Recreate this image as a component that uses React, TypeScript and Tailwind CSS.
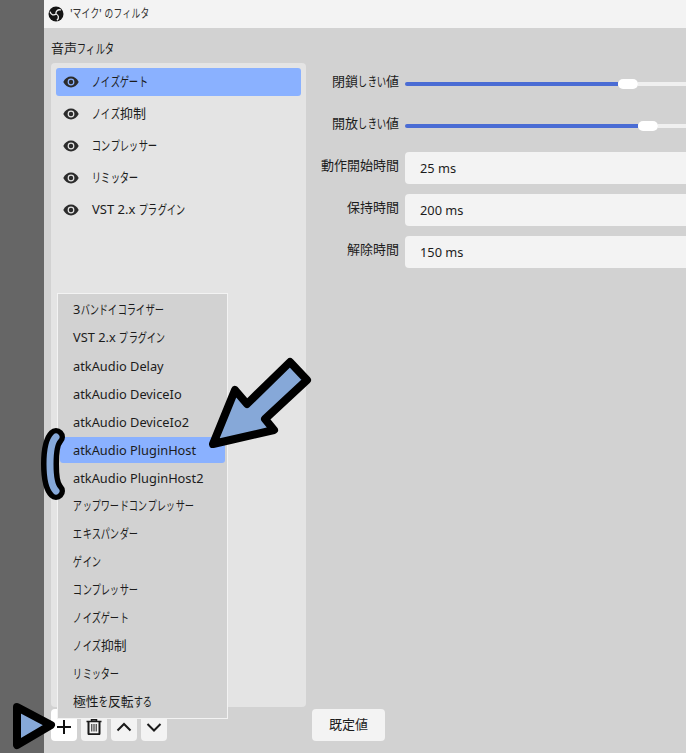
import type { ReactNode } from "react";

const font = "font-['Noto_Sans','Noto_Sans_CJK_JP',sans-serif]";

const filters = ["ノイズゲート", "ノイズ抑制", "コンプレッサー", "リミッター", "VST 2.x プラグイン"];

const menuItems = [
  "3バンドイコライザー",
  "VST 2.x プラグイン",
  "atkAudio Delay",
  "atkAudio DeviceIo",
  "atkAudio DeviceIo2",
  "atkAudio PluginHost",
  "atkAudio PluginHost2",
  "アップワードコンプレッサー",
  "エキスパンダー",
  "ゲイン",
  "コンプレッサー",
  "ノイズゲート",
  "ノイズ抑制",
  "リミッター",
  "極性を反転する",
];

// the kana in the picture are condensed and much narrower than the kanji
function Jp({ text, small }: { text: string; small?: boolean }) {
  return (
    <span className="whitespace-nowrap">
      {Array.from(text).map((ch, i) =>
        /[\u3040-\u30ff]/.test(ch) ? (
          <span key={i} className={`inline-flex justify-center ${small ? "w-[8.8px]" : "w-[9.3px]"}`}>
            <span className={`inline-block shrink-0 ${small ? "scale-x-[0.73]" : "scale-x-[0.72]"}`}>{ch}</span>
          </span>
        ) : (
          <span key={i}>{ch}</span>
        ),
      )}
    </span>
  );
}

function EyeIcon() {
  return (
    <svg width="16" height="12" viewBox="0 0 16 12" className="shrink-0">
      <path
        fillRule="evenodd"
        fill="#2b2b2b"
        d="M0.3 6C2 2.500 4.800 0.600 8 0.600S14 2.500 15.700 6C14 9.500 11.200 11.400 8 11.400S2 9.500 0.300 6ZM8 2.600A3.400 3.400 0 1 0 8 9.400A3.400 3.400 0 1 0 8 2.600ZM8 3.800A2.200 2.200 0 1 1 8 8.200A2.200 2.200 0 1 1 8 3.800Z"
      />
    </svg>
  );
}

function Slider({ fill }: { fill: number }) {
  return (
    <div className="flex h-[32px] flex-1 items-center">
      <div className="h-[4px] rounded-l-full bg-[#4a6cd4]" style={{ width: fill }} />
      <div className="h-[10px] w-[20px] shrink-0 rounded-[5px] bg-white" />
      <div className="h-[4px] flex-1 bg-[#f0f0f0]" />
    </div>
  );
}

function Row({ label, children }: { label: string; children: ReactNode }) {
  return (
    <div className="flex items-center gap-[6px]">
      <div className="w-[93px] shrink-0 pb-[4px] text-right text-[13px] text-[#1c1c1c]">
        <Jp text={label} />
      </div>
      {children}
    </div>
  );
}

function Field({ value }: { value: string }) {
  return (
    <div className="flex h-[32px] flex-1 items-center rounded-[4px] bg-[#f3f3f3] pt-[1px] pl-[15px] text-[12.8px] text-[#1c1c1c]">
      {value}
    </div>
  );
}

function ToolButton({ children, active }: { children: ReactNode; active?: boolean }) {
  return (
    <div className={`flex h-[32px] w-[26px] items-end justify-center rounded-[4px] pb-[6px] ${active ? "bg-white" : "bg-[#f3f3f3]"}`}>
      {children}
    </div>
  );
}

export default function App() {
  return (
    <div className={`relative flex h-[753px] w-[686px] overflow-hidden bg-[#d2d2d2] ${font}`}>
      {/* Desktop strip */}
      <div className="w-[44px] shrink-0 bg-[#666666]" />

      <div className="flex min-w-0 flex-1 flex-col">
        {/* Title bar */}
        <div className="flex h-[28px] shrink-0 items-center gap-[6px] bg-[#f3f3f3] pl-[4px] text-[12px] text-[#333333]">
          <svg width="16" height="16" viewBox="0 0 16 16">
            <circle cx="8" cy="8" r="7.500" fill="#151515" />
            <g fill="none" stroke="#f3f3f3" strokeWidth="1.300">
              <path d="M8 8C7.500 5.500 9.500 3 13 4" />
              <path d="M8 8C7.500 5.500 9.500 3 13 4" transform="rotate(120 8 8)" />
              <path d="M8 8C7.500 5.500 9.500 3 13 4" transform="rotate(240 8 8)" />
            </g>
          </svg>
          <Jp text="'マイク' のフィルタ" small />
        </div>

        <div className="flex min-h-0 flex-1 pl-[7px]">
          {/* Filter column */}
          <div className="flex w-[255px] shrink-0 flex-col">
            <div className="flex h-[35px] items-center pt-[6px] text-[13px] text-[#1c1c1c]">
              <Jp text="音声フィルタ" />
            </div>
            <div className="flex h-[644px] flex-col rounded-[4px] bg-[#e4e4e4] p-[5px]">
              {filters.map((name, i) => (
                <div
                  key={name}
                  className={`flex h-[28px] shrink-0 items-center gap-[13px] rounded-[3px] pl-[7px] text-[13px] text-[#1c1c1c] ${i > 0 ? "mt-[4px]" : "bg-[#8ab1ff]"}`}
                >
                  <EyeIcon />
                  <Jp text={name} />
                </div>
              ))}
            </div>
            <div className="mt-[2px] flex gap-[4px]">
              <ToolButton active>
                <svg width="16" height="16" viewBox="0 0 16 16" fill="none" stroke="#111111" strokeWidth="2">
                  <path d="M8 1V15M1 8H15" />
                </svg>
              </ToolButton>
              <ToolButton>
                <svg width="16" height="16" viewBox="0 0 16 16" fill="none" stroke="#1a1a1a">
                  <path d="M0.500 2.500H15.500M5.500 2V0.800H10.500V2" strokeWidth="1.500" />
                  <path d="M2.500 3V14.500Q2.500 15.200 3.300 15.200H12.700Q13.500 15.200 13.500 14.500V3" strokeWidth="2" />
                  <path d="M5.800 5V12.500M8 5V12.500M10.200 5V12.500" strokeWidth="1" />
                </svg>
              </ToolButton>
              <ToolButton>
                <svg width="16" height="16" viewBox="0 0 16 16" fill="none" stroke="#1a1a1a" strokeWidth="2">
                  <path d="M1.500 11.500L8 5L14.500 11.500" />
                </svg>
              </ToolButton>
              <ToolButton>
                <svg width="16" height="16" viewBox="0 0 16 16" fill="none" stroke="#1a1a1a" strokeWidth="2">
                  <path d="M1.500 5L8 11.500L14.500 5" />
                </svg>
              </ToolButton>
            </div>
          </div>

          {/* Settings column */}
          <div className="flex min-w-0 flex-1 flex-col">
            <div className="flex w-[400px] flex-col gap-[10px] pt-[40px]">
              <Row label="閉鎖しきい値">
                <Slider fill={213} />
              </Row>
              <Row label="開放しきい値">
                <Slider fill={233} />
              </Row>
              <Row label="動作開始時間">
                <Field value="25 ms" />
              </Row>
              <Row label="保持時間">
                <Field value="200 ms" />
              </Row>
              <Row label="解除時間">
                <Field value="150 ms" />
              </Row>
            </div>
            <div className="mt-auto mb-[12px] ml-[6px] flex h-[32px] w-[73px] items-center justify-center rounded-[4px] bg-[#f3f3f3] text-[13px] text-[#1c1c1c]">
              既定値
            </div>
          </div>
        </div>
      </div>

      {/* Add filter popup */}
      <div className="absolute top-[293px] left-[57px] flex h-[426px] w-[171px] flex-col border border-[#f3f3f3] bg-[#d2d2d2] px-[2px] pt-[2px] text-[12.8px] text-[#1c1c1c]">
        {menuItems.map((item) => (
          <div
            key={item}
            className={`my-[1px] flex h-[26px] shrink-0 items-center rounded-[3px] pl-[13px] ${item.startsWith("atk") ? "pt-[1px]" : ""} ${item === "atkAudio PluginHost" ? "bg-[#8ab1ff]" : ""}`}
          >
            <Jp text={item} />
          </div>
        ))}
      </div>

      {/* Callout marks */}
      <svg className="pointer-events-none absolute top-0 left-0" width="686" height="753" viewBox="0 0 686 753">
        <g fill="#86a8d8" stroke="#000000" strokeWidth="8" strokeLinejoin="round" strokeLinecap="round">
          <path d="M213 444L235 390L247 404L290 362L307 380L265 419L274 430Z" />
          <path d="M17 707L51 725L17 745Z" />
        </g>
        <g fill="none" strokeLinecap="round">
          <path d="M56 437C52 441 50 450 50 464C50 478 52 487 56 491" stroke="#000000" strokeWidth="18" />
          <path d="M56 437C52 441 50 450 50 464C50 478 52 487 56 491" stroke="#86a8d8" strokeWidth="7" />
        </g>
      </svg>
    </div>
  );
}
